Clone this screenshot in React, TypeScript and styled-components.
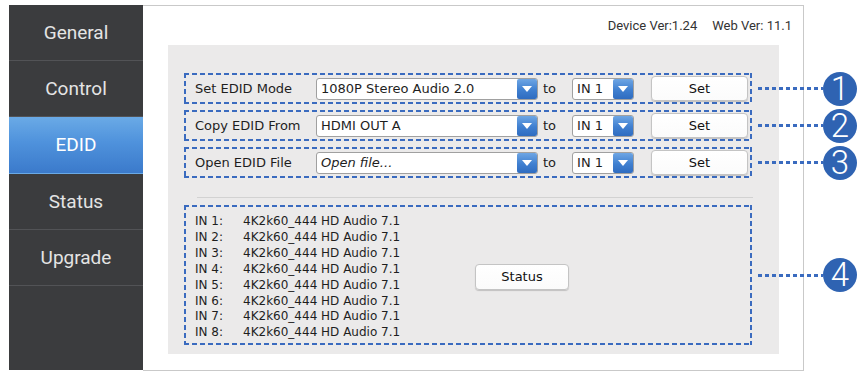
import React from 'react';
import styled, { createGlobalStyle, css } from 'styled-components';

const colors = {
  sidebar: '#3b3c3e',
  divider: '#525356',
  panel: '#ebeaea',
  frameLine: '#c9c9c9',
  dash: '#3a6bbf',
  callout: '#2f63b2',
  text: '#1e1e1e',
};

const GlobalStyle = createGlobalStyle`
  html, body {
    margin: 0;
    padding: 0;
    background: #fff;
  }
  * {
    box-sizing: border-box;
  }
`;

const dashedBox = css`
  background:
    linear-gradient(90deg, ${colors.dash} 5px, transparent 5px) top left / 8px 2px repeat-x,
    linear-gradient(90deg, ${colors.dash} 5px, transparent 5px) bottom left / 8px 2px repeat-x,
    linear-gradient(180deg, ${colors.dash} 5px, transparent 5px) top left / 2px 8px repeat-y,
    linear-gradient(180deg, ${colors.dash} 5px, transparent 5px) top right / 2px 8px repeat-y;
`;

const Page = styled.div`
  display: flex;
  padding: 5px 0 0 9px;
  width: 867px;
  height: 379px;
`;

const Sidebar = styled.nav`
  display: flex;
  flex-direction: column;
  width: 134px;
  height: 365px;
  background: ${colors.sidebar};
`;

const NavItem = styled.div<{ $active?: boolean }>`
  display: flex;
  align-items: center;
  justify-content: center;
  height: 56.2px;
  border-bottom: 1px solid ${colors.divider};
  font-family: Roboto, 'Noto Sans', sans-serif;
  font-size: 19px;
  color: ${(p) => (p.$active ? '#fff' : '#e4e4e4')};
  background: ${(p) =>
    p.$active ? 'linear-gradient(180deg, #6aaae6 0%, #4f92dc 45%, #3b7acb 100%)' : 'transparent'};
  border-bottom-color: ${(p) => (p.$active ? 'transparent' : colors.divider)};
`;

const Frame = styled.main`
  display: flex;
  flex-direction: column;
  width: 661px;
  height: 366px;
  border-top: 1px solid ${colors.frameLine};
  border-right: 1px solid ${colors.frameLine};
  border-bottom: 1px solid ${colors.frameLine};
  padding: 0 11px 16px 25px;
`;

const Header = styled.header`
  display: flex;
  align-items: center;
  justify-content: flex-end;
  gap: 15px;
  height: 39px;
  font-family: Roboto, 'Noto Sans', sans-serif;
  font-size: 13px;
  color: #333;
`;

const Panel = styled.section`
  flex: 1;
  margin-right: 13px;
  background: ${colors.panel};
  padding: 28px 27px 0 16px;
  display: flex;
  flex-direction: column;
  font-family: 'DejaVu Sans', Verdana, sans-serif;
  color: ${colors.text};
`;

const Rows = styled.div`
  display: flex;
  flex-direction: column;
  gap: 6px;
`;

const Row = styled.div`
  ${dashedBox};
  position: relative;
  display: flex;
  align-items: center;
  height: 31px;
  padding: 0 4px 0 11px;
  font-size: 13px;
`;

const Label = styled.span`
  width: 121px;
  white-space: nowrap;
`;

const Select = styled.div<{ $width: number; $italic?: boolean }>`
  position: relative;
  display: flex;
  align-items: center;
  width: ${(p) => p.$width}px;
  height: 22px;
  padding-left: 4px;
  background: #fff;
  border: 1px solid #a0a0a0;
  border-radius: 3px;
  font-size: 13px;
  font-style: ${(p) => (p.$italic ? 'italic' : 'normal')};
  white-space: nowrap;
`;

const Arrow = styled.span`
  position: absolute;
  right: 0;
  top: 0;
  bottom: 0;
  width: 20px;
  border-radius: 2px;
  background: linear-gradient(180deg, #6ea6e4 0%, #3f7fd0 55%, #2f6cc0 100%);
  display: flex;
  align-items: center;
  justify-content: center;

  &::after {
    content: '';
    border-left: 5px solid transparent;
    border-right: 5px solid transparent;
    border-top: 6px solid #fff;
  }
`;

const To = styled.span`
  margin: 0 16px 0 5px;
`;

const Button = styled.button<{ $width: number }>`
  width: ${(p) => p.$width}px;
  height: 25px;
  margin-left: auto;
  background: linear-gradient(180deg, #ffffff 0%, #fbfbfb 100%);
  border: 1px solid #c4c4c4;
  border-radius: 4px;
  box-shadow: 0 1px 1px rgba(0, 0, 0, 0.18);
  font-family: 'DejaVu Sans', Verdana, sans-serif;
  font-size: 13px;
  color: #111;
  padding: 0;
`;

const Separator = styled.hr`
  margin: 19px 0 7px 13px;
  border: none;
  border-top: 1px solid #d2d2d2;
  width: 556px;
`;

const StatusBox = styled.div`
  ${dashedBox};
  position: relative;
  display: flex;
  align-items: center;
  height: 140px;
  padding: 9px 0 0 11px;
`;

const StatusList = styled.div`
  display: grid;
  grid-template-columns: 48px auto;
  width: 280px;
  font-size: 12px;
  line-height: 15.9px;
  white-space: nowrap;
  align-self: flex-start;
`;

const StatusButton = styled(Button)`
  margin-left: 0;
  margin-top: -6px;
  height: 26px;
`;

const Callout = styled.div`
  position: absolute;
  left: calc(100% + 6px);
  top: 50%;
  transform: translateY(-50%);
  display: flex;
  align-items: center;
`;

const Dots = styled.span`
  width: 65px;
  height: 3px;
  background: repeating-linear-gradient(90deg, ${colors.dash} 0 4px, transparent 4px 7px);
`;

const Badge = styled.span`
  width: 34px;
  height: 34px;
  border-radius: 50%;
  background: ${colors.callout};
  color: #fff;
  font-family: Roboto, 'Liberation Sans', sans-serif;
  font-weight: 300;
  font-size: 33px;
  line-height: 34px;
  text-align: center;
`;

const navItems = ['General', 'Control', 'EDID', 'Status', 'Upgrade'];

const edidRows = [
  { label: 'Set EDID Mode', value: '1080P Stereo Audio 2.0' },
  { label: 'Copy EDID From', value: 'HDMI OUT A' },
  { label: 'Open EDID File', value: 'Open file...', italic: true },
];

const inputs = [1, 2, 3, 4, 5, 6, 7, 8];

const Mark = ({ n }: { n: number }) => (
  <Callout>
    <Dots />
    <Badge>{n}</Badge>
  </Callout>
);

const App = () => {
  return (
    <>
      <GlobalStyle />
      <Page>
        <Sidebar>
          {navItems.map((item) => (
            <NavItem key={item} $active={item === 'EDID'}>
              {item}
            </NavItem>
          ))}
        </Sidebar>
        <Frame>
          <Header>
            <span>Device Ver:1.24</span>
            <span>Web Ver: 11.1</span>
          </Header>
          <Panel>
            <Rows>
              {edidRows.map((row, i) => (
                <Row key={row.label}>
                  <Label>{row.label}</Label>
                  <Select $width={222} $italic={row.italic}>
                    {row.value}
                    <Arrow />
                  </Select>
                  <To>to</To>
                  <Select $width={62}>
                    IN 1
                    <Arrow />
                  </Select>
                  <Button $width={97}>Set</Button>
                  <Mark n={i + 1} />
                </Row>
              ))}
            </Rows>
            <Separator />
            <StatusBox>
              <StatusList>
                {inputs.map((n) => (
                  <React.Fragment key={n}>
                    <span>IN {n}:</span>
                    <span>4K2k60_444 HD Audio 7.1</span>
                  </React.Fragment>
                ))}
              </StatusList>
              <StatusButton $width={94}>Status</StatusButton>
              <Mark n={4} />
            </StatusBox>
          </Panel>
        </Frame>
      </Page>
    </>
  );
};

export default App;
